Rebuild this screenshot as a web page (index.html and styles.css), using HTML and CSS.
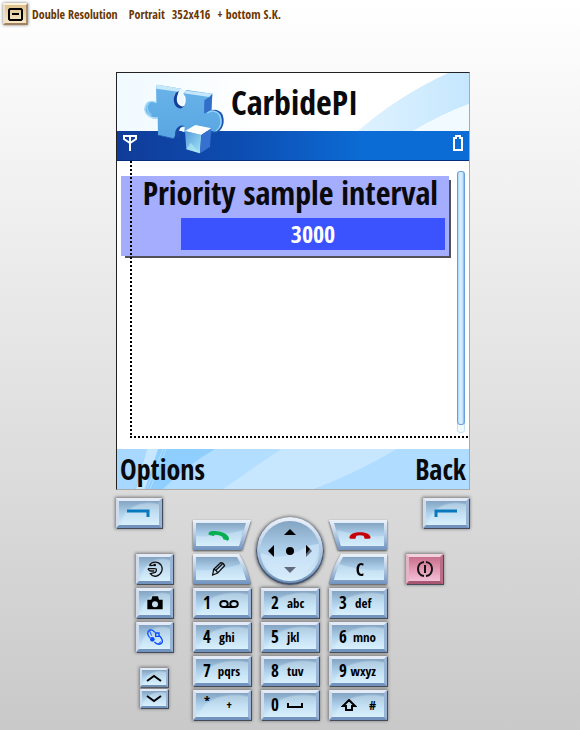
FILE: index.html
```
<!DOCTYPE html>
<html lang="en">
<head>
<meta charset="utf-8">
<title>CarbidePI</title>
<link rel="stylesheet" href="styles.css">
</head>
<body>
<header class="toolbar">
  <button class="mode" type="button" aria-label="Display mode">
    <svg width="15" height="13" viewBox="0 0 15 13"><path d="M2 1H13L14 2V11L13 12H2L1 11V2Z" fill="none" stroke="#000" stroke-width="2"/><path d="M4 6H11" stroke="#000" stroke-width="2"/></svg>
  </button>
  <span>Double Resolution</span><span class="wide">Portrait</span><span>352x416</span><span>+ bottom S.K.</span>
</header>

<main class="phone">
  <section class="screen">
    <div class="title">
      <svg class="fill" viewBox="0 0 352 58" preserveAspectRatio="none">
        <defs>
          <linearGradient id="head"><stop offset="0" stop-color="#f0faff"/><stop offset=".4" stop-color="#fff"/></linearGradient>
          <linearGradient id="swoop"><stop offset="0" stop-color="#dff2ff"/><stop offset="1" stop-color="#c5e7fe"/></linearGradient>
        </defs>
        <path d="M0 0H352V58H0Z" fill="url(#head)"/>
        <path d="M241 58Q278 25 331 0H352V31Q323 42 296 58Z" fill="url(#swoop)"/>
        <path d="M352 31Q323 42 296 58H352Z" fill="#f1faff"/>
      </svg>
      <svg class="puzzle" width="84" height="74" viewBox="99 48 252 222">
        <defs>
          <linearGradient id="cube" x1="0" y1="0" x2="1" y2="1"><stop offset="0" stop-color="#5599db"/><stop offset="1" stop-color="#a4e6f6"/></linearGradient>
          <linearGradient id="piece" x1="0" y1="0" x2="0" y2="1"><stop offset="0" stop-color="#69b3e9"/><stop offset="1" stop-color="#58a6e2"/></linearGradient>
        </defs>
        <path d="M290 145C302 126 326 128 337 145C347 168 338 194 318 201L298 205Z" fill="#1553ae"/>
        <path d="M138 58L143 56L214 68L210 78L194 84C188 102 196 122 208 126C224 128 230 108 226 92L219 82L230 72L307 83L305 132L294 139C304 130 322 132 331 145C342 167 334 190 316 197L288 192L272 209L222 198L221 187C208 176 193 194 197 212L191 219L144 208L143 157C129 162 107 151 104 133C102 112 119 99 139 109Z" fill="url(#piece)"/>
        <path d="M138 58L143 56L214 68L209 78L139 68ZM228 74L307 83L298 93L221 82Z" fill="#c5e8fb"/>
        <path d="M298 93L307 83L304 132L282 143L283 103Z" fill="#326fc9"/>
        <path d="M207 76C190 78 187 109 198 121C206 130 216 129 222 121C207 123 198 110 201 94Z" fill="#123e9c"/>
        <path d="M206 78C198 94 204 115 214 119C224 116 226 97 219 84L226 73L213 68Z" fill="#eef9ff"/>
        <path d="M139 110C120 99 103 113 105 133C108 148 127 159 143 155" fill="none" stroke="#b2e0fa" stroke-width="4"/>
        <path d="M118 109C108 119 109 138 124 147" fill="none" stroke="#8accf1" stroke-width="5"/>
        <path d="M292 141C307 129 323 138 329 148C337 169 331 186 318 195" fill="none" stroke="#98d0f3" stroke-width="4"/>
        <path d="M144 208L192 219L198 212L205 218L212 208C202 194 211 181 224 180C209 173 193 188 196 207L191 217L144 206Z" fill="#1949a7"/>
        <path d="M210 191Q212 181 224 183L223 199L212 194Z" fill="#f4fbff"/>
        <path d="M225 195L256 177L304 187L274 207Z" fill="#fff"/>
        <path d="M225 195L274 207L270 262L229 250Z" fill="url(#cube)"/>
        <path d="M274 207L304 187L300 243L270 262Z" fill="#3771cf"/>
        <path d="M229 250L242 230L270 262Z" fill="#b8edf5" opacity=".6"/>
      </svg>
      <h1>CarbidePI</h1>
    </div>
    <div class="status">
      <svg width="16" height="18" viewBox="0 0 16 18"><path d="M1 2H15M2 2V5L8 9L14 5V2M8 2V17" fill="none" stroke="#fff" stroke-width="2"/></svg>
      <svg width="12" height="18" viewBox="0 0 12 18"><path d="M2 4H4V2H8V4H10V16H2Z" fill="none" stroke="#fff" stroke-width="2"/></svg>
    </div>
    <div class="view">
      <div class="popup">
        <label for="interval">Priority sample interval</label>
        <input id="interval" type="text" value="3000">
      </div>
      <div class="guides"></div>
      <div class="track"><div class="thumb"></div></div>
    </div>
    <nav class="softbar">
      <svg class="fill" viewBox="0 0 352 40" preserveAspectRatio="none">
        <path d="M0 0H352V40H0Z" fill="#8fcfff"/>
        <path d="M0 0H30L18 40H0Z" fill="#a8d8ff"/><path d="M30 0H41L28 40H19Z" fill="#c7e6ff"/>
        <path d="M46 0L30 40M49 0L33 40" stroke="#b3deff"/>
        <path d="M98 0H352V40H46Q69 17 98 0Z" fill="#b4deff"/>
        <path d="M164 0H280Q240 24 197 40H106Z" fill="#c7e6ff"/>
        <path d="M280 0H352V40H197Q240 24 280 0Z" fill="#afdcff"/>
      </svg>
      <a href="#options">Options</a><a href="#back">Back</a>
    </nav>
  </section>

  <svg class="defs" width="0" height="0" aria-hidden="true">
    <defs>
      <linearGradient id="face" x1="0" y1="0" x2="0" y2="1"><stop offset="0" stop-color="#83a4c2"/><stop offset=".45" stop-color="#abcde8"/><stop offset="1" stop-color="#daf0fc"/></linearGradient>
      <linearGradient id="rim" x1="0" y1="0" x2="0" y2="1"><stop offset="0" stop-color="#edf2fa"/><stop offset=".4" stop-color="#c0d3e9"/><stop offset="1" stop-color="#7093c0"/></linearGradient>
      <symbol id="narrow" viewBox="0 0 58 30"><path d="M0 0H58L49 30H0Z" fill="url(#rim)"/><path d="M3 3H53L46 26H3Z" fill="url(#face)"/><path d="M3 16Q22 18 50 10L46 26H3Z" fill="#d5edfb" opacity=".45"/></symbol>
      <symbol id="flared" viewBox="0 0 58 30"><path d="M0 0H46Q54 12 58 30H0Z" fill="url(#rim)"/><path d="M3 3H44Q50 13 53 26H3Z" fill="url(#face)"/><path d="M3 16Q22 18 48 10L53 26H3Z" fill="#d5edfb" opacity=".45"/></symbol>
    </defs>
  </svg>

  <section class="keys">
    <div class="side left">
      <button class="key soft" type="button" aria-label="Left soft key"><svg width="24" height="8" viewBox="0 0 24 8"><path d="M0 2H21V8" fill="none" stroke="#0879bd" stroke-width="3"/></svg></button>
      <button class="key small" type="button" aria-label="Menu"><svg width="16" height="16" viewBox="0 0 48 48"><path d="M7 14C14 1 33 0 42 12C50 24 43 41 29 45C21 47 14 44 10 38L25 34Q31 28 26 22M7 14L20 13M3 23H25M3 23Q5 30 12 30H22" fill="none" stroke="#111" stroke-width="4"/><circle cx="23" cy="12" r="4"/></svg></button>
      <button class="key small" type="button" aria-label="Camera"><svg width="16" height="14" viewBox="0 0 48 42"><path d="M1 11H13L16 1H33L36 11H47V40H1Z"/><circle cx="24" cy="25" r="9" fill="#c2dff2"/></svg></button>
      <button class="key small" type="button" aria-label="Applications"><svg width="16" height="16" viewBox="0 0 48 48"><path d="M10 27C0 20 0 6 8 3C14 1 20 5 24 10M36 20C46 27 49 39 43 43C37 47 28 45 22 39" fill="none" stroke="#0b4cff" stroke-width="4"/><path d="M8 6L14 20M34 44L42 38" stroke="#0b4cff" stroke-width="3"/><circle cx="16" cy="31" r="7" fill="#0b4cff"/><path d="M26 12H36V22H26Z" fill="none" stroke="#0b4cff" stroke-width="4"/></svg></button>
      <div class="pair">
        <button class="key" type="button" aria-label="Up"><svg width="16" height="8" viewBox="0 0 16 8"><path d="M1 7L8 2L15 7" fill="none" stroke="#000" stroke-width="2"/></svg></button>
        <button class="key" type="button" aria-label="Down"><svg width="16" height="8" viewBox="0 0 16 8"><path d="M1 1L8 6L15 1" fill="none" stroke="#000" stroke-width="2"/></svg></button>
      </div>
    </div>

    <div class="pad">
      <button class="cut" type="button" aria-label="Call"><svg class="shape"><use href="#narrow"/></svg><svg class="glyph" width="22" height="11" viewBox="0 0 66 33"><path d="M2 14C0 5 8 2 19 3C44 4 64 14 63 27L60 32L46 28L43 20Q31 13 21 14L17 18Z" fill="#06af50"/></svg></button>
      <div class="dpad">
        <svg viewBox="0 0 68 68">
          <circle cx="34" cy="34" r="34" fill="#46566d"/><circle cx="34" cy="33" r="33" fill="url(#rim)"/>
          <circle cx="34" cy="34" r="30" fill="url(#face)"/>
          <path d="M5 36Q24 44 43 34Q54 27 63 27A30 30 0 0 1 5 40Z" fill="#d5e9fb" opacity=".6"/>
        </svg>
        <button class="up" type="button" aria-label="Navigate up"><svg width="12" height="6" viewBox="0 0 12 6"><path d="M0 6L6 0L12 6Z"/></svg></button>
        <button class="west" type="button" aria-label="Navigate left"><svg width="6" height="12" viewBox="0 0 6 12"><path d="M6 0V12L0 6Z"/></svg></button>
        <button class="ok" type="button" aria-label="Select"><svg width="8" height="8" viewBox="0 0 8 8"><circle cx="4" cy="4" r="4"/></svg></button>
        <button class="east" type="button" aria-label="Navigate right"><svg width="6" height="12" viewBox="0 0 6 12"><path d="M0 0V12L6 6Z" fill="#5f6b82"/><path d="M0 0L4 4L0 9Z"/></svg></button>
        <button class="down" type="button" aria-label="Navigate down"><svg width="12" height="6" viewBox="0 0 12 6"><path d="M0 0L6 6L12 0Z" fill="#626b7e"/></svg></button>
      </div>
      <button class="cut" type="button" aria-label="End call"><svg class="shape flip"><use href="#narrow"/></svg><svg class="glyph" width="22" height="7" viewBox="0 0 66 21"><path d="M1 18C2 5 17 1 33 1S64 5 65 18L60 20H47L44 11Q33 8 22 11L19 20H5Z" fill="#c50007"/></svg></button>
      <button class="cut" type="button" aria-label="Edit"><svg class="shape"><use href="#flared"/></svg><svg class="glyph" width="16" height="16" viewBox="0 0 48 48"><path d="M5 42L8 25L29 5Q37 5 41 14L20 36ZM8 25Q16 26 20 36M13 29L34 9" fill="none" stroke="#111" stroke-width="4"/></svg></button>
      <button class="cut" type="button"><svg class="shape flip"><use href="#flared"/></svg><span class="glyph clear">C</span></button>

      <button class="key num" type="button"><b>1</b><svg width="20" height="9" viewBox="0 0 20 9"><path d="M5 8C0 8 0 2 5 2S10 8 5 8H15C10 8 10 2 15 2S20 8 15 8" fill="none" stroke="#000" stroke-width="2"/></svg></button>
      <button class="key num" type="button"><b>2</b><span>abc</span></button>
      <button class="key num" type="button"><b>3</b><span>def</span></button>
      <button class="key num" type="button"><b>4</b><span>ghi</span></button>
      <button class="key num" type="button"><b>5</b><span>jkl</span></button>
      <button class="key num" type="button"><b>6</b><span>mno</span></button>
      <button class="key num" type="button"><b>7</b><span>pqrs</span></button>
      <button class="key num" type="button"><b>8</b><span>tuv</span></button>
      <button class="key num" type="button"><b>9</b><span>wxyz</span></button>
      <button class="key num apart" type="button"><span class="star">*</span><span>+</span></button>
      <button class="key num" type="button"><b>0</b><svg width="16" height="5" viewBox="0 0 16 5"><path d="M1 0V4H15V0" fill="none" stroke="#000" stroke-width="2"/></svg></button>
      <button class="key num shift" type="button"><svg width="16" height="12" viewBox="0 0 16 12"><path d="M8 1L14 7H11V11H5V7H2Z" fill="none" stroke="#000" stroke-width="2"/></svg><span>#</span></button>
    </div>

    <div class="side right">
      <button class="key soft" type="button" aria-label="Right soft key"><svg width="24" height="8" viewBox="0 0 24 8"><path d="M2 8V2H23" fill="none" stroke="#0879bd" stroke-width="3"/></svg></button>
      <button class="key small power" type="button" aria-label="Power"><svg width="16" height="16" viewBox="0 0 16 16"><path d="M7 1C-1 2 -1 14 7 15M9 1C17 2 17 14 9 15M8 4V12" fill="none" stroke="#111" stroke-width="2"/></svg></button>
    </div>
  </section>
</main>
</body>
</html>
```
FILE: styles.css
```
* { box-sizing: border-box; }

body {
  margin: 0;
  min-height: 100vh;
  background: linear-gradient(#fff, #f5f5f5 18%, #c9c9c9);
  font-family: "Open Sans Condensed", "Liberation Sans Narrow", "Liberation Sans", sans-serif;
  font-weight: bold;
  color: #0a0a0c;
}

button { padding: 0; border: 0; background: none; font: inherit; color: #000; }
svg { display: block; }
.defs { position: absolute; }

.toolbar {
  display: flex;
  align-items: center;
  gap: 7px;
  height: 28px;
  padding-left: 3px;
  font-size: 12px;
  color: #6b3600;
  white-space: nowrap;
}
.toolbar .mode { margin-right: -3px; }
.toolbar .wide { margin-left: 4px; }
.mode {
  display: grid;
  place-items: center;
  width: 25px;
  height: 22px;
  border: 2px solid;
  border-color: #fff3dc #a98a6c #a3805f #efdfc8;
  background: linear-gradient(#dfc18d, #f7e9c6);
  box-shadow: 0 0 3px #777;
}

.phone {
  max-width: 354px;
  margin: 44px auto 0;
  position: relative;
  left: 3px;
}

.screen {
  border: 1px solid #222;
  border-right-color: #aaa;
  border-bottom-color: #aaa;
  background: #fff;
}
.fill { position: absolute; inset: 0; width: 100%; height: 100%; }

.title { position: relative; height: 58px; padding-left: 114px; }
.title h1 {
  position: relative;
  margin: 0;
  font-size: 34px;
  line-height: 58px;
}
.puzzle { position: absolute; left: 26px; top: 9px; z-index: 1; }

.status {
  display: flex;
  justify-content: space-between;
  height: 30px;
  padding: 3px 5px;
  border-bottom: 1px solid #062c7b;
  background: linear-gradient(90deg, #103c99, #0d4db1 35%, #0c6cd5 70%);
}

.view { position: relative; height: 288px; padding: 15px 20px 0 4px; }
.popup {
  display: flex;
  flex-direction: column;
  align-items: flex-end;
  height: 80px;
  padding-right: 4px;
  background: #a5adff;
  box-shadow: 3px 3px 0 -1px #505057;
}
.popup label {
  padding-right: 7px;
  font-size: 32px;
  line-height: 34px;
  white-space: nowrap;
}
.popup input {
  width: 264px;
  max-width: 90%;
  height: 32px;
  margin: 8px 0 0;
  padding: 0 0 2px;
  border: 0;
  background: #3a52ff;
  color: #fff;
  font: inherit;
  font-size: 24px;
  text-align: center;
}
.guides {
  position: absolute;
  inset: 0 0 11px 13px;
  pointer-events: none;
  background:
    repeating-linear-gradient(#000 0 2px, transparent 2px 4px) left top / 2px 100% no-repeat,
    repeating-linear-gradient(90deg, #000 0 2px, transparent 2px 4px) left bottom / 100% 2px no-repeat;
}
.track {
  position: absolute;
  top: 10px;
  right: 4px;
  width: 8px;
  height: 262px;
  border: 1px solid #c5e2f5;
  border-radius: 3px;
  background: #f0faff;
}
.thumb {
  height: 254px;
  margin: -1px;
  border: 1px solid #6b9fda;
  border-radius: 3px;
  background: linear-gradient(90deg, #a6d3fa, #d8f0ff 30%, #d0ebff 70%, #82b3e8);
}

.softbar {
  position: relative;
  display: flex;
  justify-content: space-between;
  height: 40px;
  padding: 0 3px;
  font-size: 28px;
  line-height: 40px;
}
.softbar a { position: relative; color: inherit; text-decoration: none; }

.keys { display: flex; gap: 19px; padding-top: 8px; }
.side { display: flex; flex-direction: column; gap: 4px; align-items: flex-end; width: 58px; }
.left { padding-right: 1px; }
.right { align-items: flex-start; width: 63px; }
.left .soft { align-self: flex-start; margin-bottom: 22px; }
.right .soft { align-self: flex-end; margin-bottom: 22px; }

.key {
  display: grid;
  place-items: center;
  height: 30px;
  border: 3px solid;
  border-color: #e5ebf6 #9ab4d5 #7293bd #d0dcec;
  background:
    radial-gradient(ellipse at 75% 100%, #e2f5ff66 0 62%, transparent 68%),
    linear-gradient(#83a4c2, #add0ea 50%, #d3edfb);
  box-shadow: 1px 1px 0 #444c59, 0 0 3px 1px #777;
}
.soft { width: 46px; }
.small { width: 37px; }
.power {
  border-color: #f2d2df #b96d86 #a85773 #e4b5c7;
  background: linear-gradient(#c76f8c, #e296b1 50%, #f3bfd8);
}
.pair { display: grid; gap: 2px; margin: 12px 5px 0 0; }
.pair .key { width: 28px; height: 19px; border-width: 2px; }

.pad {
  display: grid;
  grid-template-columns: repeat(3, 58px);
  grid-auto-rows: 30px;
  gap: 4px 10px;
  padding-top: 22px;
}
.cut { display: grid; position: relative; filter: drop-shadow(0 1px 1px #444); }
.shape { grid-area: 1 / 1; width: 58px; height: 30px; }
.flip { transform: scaleX(-1); }
.glyph { grid-area: 1 / 1; place-self: center; position: relative; margin-right: 6px; }
.flip + .glyph { margin: 0 0 0 4px; }
.clear { font-size: 18px; line-height: 20px; }

.num { display: flex; align-items: center; padding: 0 8px 0 7px; }
.num b { width: 16px; font-size: 17px; line-height: 20px; text-align: left; }
.num span { font-size: 13px; line-height: 16px; white-space: nowrap; }
.shift, .apart { justify-content: space-between; }
.shift { padding-left: 9px; }
.apart { padding: 0 16px 0 8px; }
.num .star { align-self: flex-start; }

.dpad {
  grid-area: 1 / 2 / span 2 / span 1;
  position: relative;
  display: grid;
  grid-template: repeat(3, 1fr) / repeat(3, 1fr);
  place-items: center;
  margin: -3px -5px -1px;
  padding: 6px;
  border-radius: 50%;
  box-shadow: 0 0 3px 1px #777;
}
.dpad > svg { position: absolute; inset: 0; width: 100%; height: 100%; }
.dpad button { position: relative; }
.up { grid-area: 1 / 2; }
.west { grid-area: 2 / 1; }
.ok { grid-area: 2 / 2; }
.east { grid-area: 2 / 3; }
.down { grid-area: 3 / 2; }
```
